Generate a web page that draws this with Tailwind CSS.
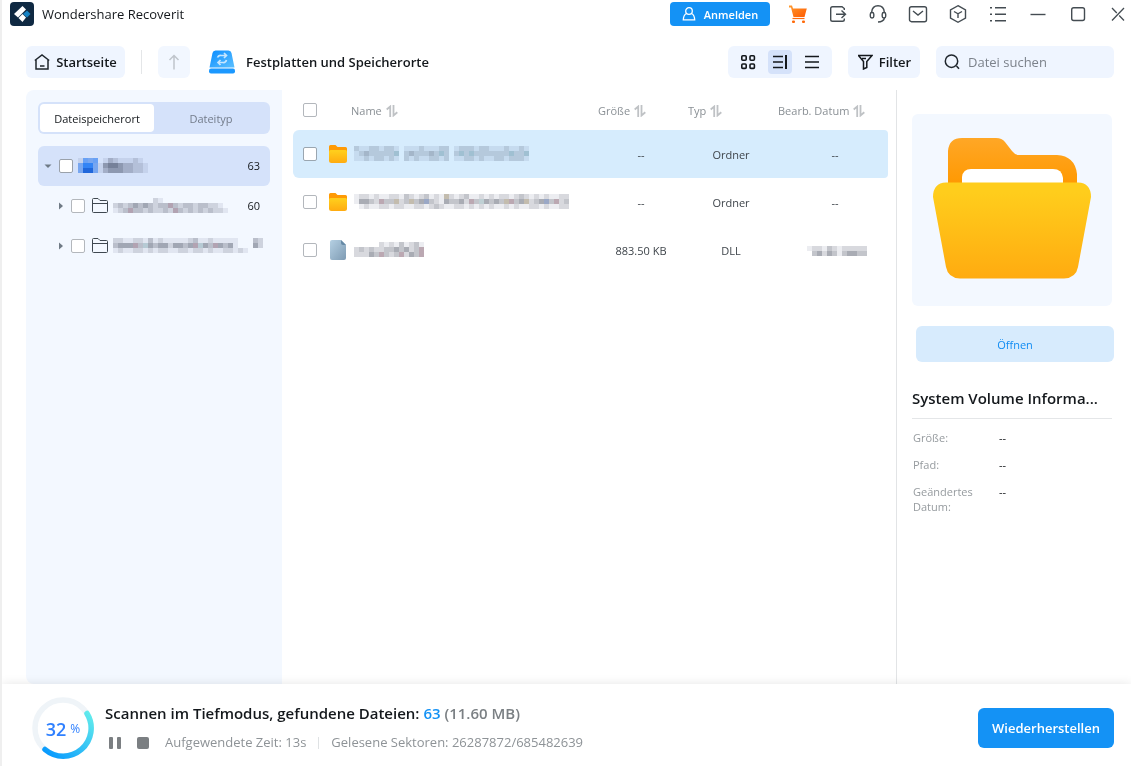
<!DOCTYPE html>
<html lang="de">
<head>
<meta charset="utf-8">
<meta name="viewport" content="width=device-width, initial-scale=1">
<title>Wondershare Recoverit</title>
<script src="https://cdn.jsdelivr.net/npm/@tailwindcss/browser@4"></script>
</head>
<body class="flex h-screen flex-col overflow-hidden border-l-2 border-[#efefef] bg-white font-['Open_Sans','Noto_Sans',sans-serif] text-[13px] text-[#14181c]">

<svg class="absolute size-0" aria-hidden="true">
  <defs>
    <linearGradient id="back" x1="0" y1="0" x2="0" y2="1"><stop offset="0" stop-color="#ffa726"/><stop offset=".7" stop-color="#ff9800"/></linearGradient>
    <linearGradient id="front" x1="0" y1="0" x2="0" y2="1"><stop offset=".1" stop-color="#ffcd1c"/><stop offset="1" stop-color="#ffab10"/></linearGradient>
    <linearGradient id="doc" x1="0" y1="0" x2="1" y2="1"><stop offset="0" stop-color="#b5d0e3"/><stop offset="1" stop-color="#7e9bb3"/></linearGradient>
    <linearGradient id="drive" x1="0" y1="0" x2="1" y2="1"><stop offset="0" stop-color="#0a8cff"/><stop offset="1" stop-color="#5cc0ff"/></linearGradient>
    <linearGradient id="cart" x1="0" y1="0" x2="1" y2="1"><stop offset="0" stop-color="#ff9a2e"/><stop offset="1" stop-color="#ff5a00"/></linearGradient>
    <linearGradient id="arc" x1="1" y1="0" x2="0" y2="1"><stop offset="0" stop-color="#62ecec"/><stop offset="1" stop-color="#0496ff"/></linearGradient>
    <symbol id="folder" viewBox="0 0 18 18"><path d="M0 1.5Q0 0 1.500 0H6.500L8.500 2H16.500Q18 2 18 3.500V9H0Z" fill="#ff9a05"/><path d="M0 6.500Q0 5 1.500 5H16.500Q18 5 18 6.500V15.500Q18 18 15.500 18H2.500Q0 18 0 15.500Z" fill="url(#front)"/></symbol>
    <symbol id="outline-folder" viewBox="0 0 16 16"><path d="M.5 13.500V1.500Q.5 .5 1.500 .5H6L8 2.500H14.500Q15.500 2.500 15.500 3.500V13.500Q15.500 14.500 14.500 14.500H1.500Q.5 14.500 .5 13.500ZM.5 5.500H15.500" fill="none" stroke="#3f4850"/></symbol>
    <symbol id="sort" viewBox="0 0 12 12"><path d="M.7 4.500 4.200 1.500V12M7.500 0V10.500L11.300 7.300" fill="none" stroke="#bfc2c5" stroke-width="1.800"/></symbol>
  </defs>
</svg>

<header class="flex h-7 shrink-0 items-center pr-[3px] pl-2">
  <svg class="size-6" viewBox="0 0 24 24" aria-hidden="true"><rect width="24" height="24" rx="4" fill="#0f2942"/><path d="M12.500 4 16 7.500 8 15.500 4 12Z" fill="#fff"/><path d="M12.500 12 16 15.500 12.500 20 8.500 16Z" fill="#fff"/><path d="M17 8.500 20.500 12 17 15.500 13 12Z" fill="#1683c4"/></svg>
  <h1 class="ml-2 pt-0.5 text-[13px]">Wondershare Recoverit</h1>
  <div class="ml-auto flex items-center gap-5 text-[#444c52]">
    <button class="-mr-0.5 flex h-6 w-[100px] items-center justify-center gap-2 rounded bg-[#1492f5] text-[11px] font-semibold text-white">
      <svg class="size-3.5" viewBox="0 0 14 14" fill="none" stroke="currentColor" stroke-width="1.300" aria-hidden="true"><circle cx="7" cy="4" r="3.300"/><path d="M4.500 6.500Q1.500 8 1.300 12.800H12.700Q12.500 8 9.500 6.500"/></svg><span class="pt-0.5">Anmelden</span>
    </button>
    <button aria-label="Warenkorb"><svg class="size-5" viewBox="0 0 20 20"><path d="M1 1.500H4L5 4.500H18.800L16.500 13H5.500L3 3.500H1Z" fill="url(#cart)"/><path d="M4.500 14.500H16.500" stroke="#ff6a0a" stroke-width="1.200"/><rect x="4" y="16.500" width="3" height="2.500" rx="1" fill="#ff6a0a"/><rect x="14" y="16.500" width="3" height="2.500" rx="1" fill="#ff6a0a"/></svg></button>
    <button aria-label="Exportieren"><svg class="size-5" viewBox="0 0 20 20" fill="none" stroke="currentColor" stroke-width="1.400"><path d="M16.300 6V4.500L14 2.700H4.500Q2.700 2.700 2.700 4.500V15.500Q2.700 17.300 4.500 17.300H14.500Q16.300 17.300 16.300 15.500V14.500M8 10.300H17.500M13.500 6.500 17.500 10.300 13.500 14"/></svg></button>
    <button aria-label="Support"><svg class="size-5" viewBox="0 0 20 20" fill="none" stroke="currentColor" stroke-width="1.400"><path d="M3.700 9V8Q4.200 1.700 10 1.700T16.300 8V9"/><rect x="2.300" y="8.500" width="3.500" height="5.500" rx="1.700"/><rect x="14.200" y="8.500" width="3.500" height="5.500" rx="1.700"/><path d="M16.500 14Q15.500 17.800 10 18"/></svg></button>
    <button aria-label="Nachricht"><svg class="size-5" viewBox="0 0 20 20" fill="none" stroke="currentColor" stroke-width="1.400"><rect x="1.500" y="2.700" width="17" height="15" rx="2"/><path d="M5 7 10 11 15 7"/></svg></button>
    <button aria-label="Produkte"><svg class="size-5" viewBox="0 0 20 20" fill="none" stroke="currentColor" stroke-width="1.400"><path d="M10 1.700 17.500 6V14L10 18.300 2.500 14V6ZM6 7.500 10 9.800 14 7.500M10 9.800V14"/></svg></button>
    <button aria-label="Menü"><svg class="size-5" viewBox="0 0 20 20" fill="none" stroke="currentColor" stroke-width="1.500"><path d="M2 3.700H4M7 3.700H18M2 10.300H4M7 10.300H18M2 16.800H4M7 16.800H18"/></svg></button>
    <button aria-label="Minimieren"><svg class="size-5" viewBox="0 0 20 20" stroke="currentColor" stroke-width="1.400"><path d="M2.500 10.500H17.500"/></svg></button>
    <button aria-label="Maximieren"><svg class="size-5" viewBox="0 0 20 20" fill="none" stroke="currentColor" stroke-width="1.400"><rect x="3.700" y="3.700" width="12.800" height="12.800" rx="2"/></svg></button>
    <button aria-label="Schließen"><svg class="size-5" viewBox="0 0 20 20" fill="none" stroke="currentColor" stroke-width="1.300"><path d="M4 4 8.800 9M11.200 11.500 16 16.500M16 4 4 16.500"/></svg></button>
  </div>
</header>

<nav class="mt-[18px] mb-3 flex shrink-0 items-center pr-[17px] pl-6 font-semibold">
  <button class="flex h-8 w-[99px] items-center justify-center gap-1.5 rounded-md bg-[#eff5ff]">
    <svg class="size-4 shrink-0" viewBox="0 0 16 16" fill="none" stroke="#1f262d" stroke-width="1.500" aria-hidden="true"><path d="M.8 6.500 8 1 15.200 6.500M2 6V15H14V6M6 12H10.500"/></svg><span class="pt-0.5">Startseite</span>
  </button>
  <span class="ml-4 h-6 w-px bg-[#e4e6e8]"></span>
  <button class="ml-4 flex size-8 items-center justify-center rounded-md bg-[#f2f7ff]" aria-label="Nach oben"><svg class="h-4 w-3" viewBox="0 0 12 16" fill="none" stroke="#c0c5cc" stroke-width="1.500"><path d="M6 15.500V2M1.500 6 6 1.500 10.500 6"/></svg></button>
  <svg class="ml-[19px] h-6 w-[26px]" viewBox="0 0 26 24" aria-hidden="true"><path d="M3.500 3Q4 .500 6.500 .500H19.500Q22 .500 22.500 3L25.500 17.500H.500Z" fill="url(#drive)"/><rect y="18.500" width="26" height="5" rx="2" fill="#1b98ff"/><path d="M8.500 7.500Q9.500 5 12 5.500H17M15 3 17.500 5.500 15 8M17.500 10Q16.500 13 14 12.500H9.500M11.500 10 9 12.500 11.500 15" fill="none" stroke="#c7e6ff" stroke-width="1.700"/></svg>
  <span class="ml-[11px] pt-0.5">Festplatten und Speicherorte</span>
  <div class="ml-auto flex h-8 w-[104px] items-center justify-center gap-2 rounded-md bg-[#eff5ff]">
    <button class="flex size-6 items-center justify-center" aria-label="Kacheln"><svg class="size-4" viewBox="0 0 16 16" fill="none" stroke="#14181c" stroke-width="1.600"><rect x="1.800" y="1.800" width="4.400" height="4.400" rx="1"/><rect x="10" y="1.800" width="4.400" height="4.400" rx="1"/><rect x="1.800" y="10" width="4.400" height="4.400" rx="1"/><rect x="10" y="10" width="4.400" height="4.400" rx="1"/></svg></button>
    <button class="flex size-6 items-center justify-center rounded bg-[#d5e2fa]" aria-label="Vorschau"><svg class="size-4" viewBox="0 0 16 16" stroke="#14181c" stroke-width="1.600"><path d="M1 2.500H11M1 8H11M1 13.500H11"/><path d="M14 1V15" stroke-width="2"/></svg></button>
    <button class="flex size-6 items-center justify-center" aria-label="Liste"><svg class="size-4" viewBox="0 0 16 16" stroke="#14181c" stroke-width="1.500"><path d="M1 2.500H15M1 8H15M1 13.500H15"/></svg></button>
  </div>
  <button class="ml-4 flex h-8 w-[72px] items-center justify-center gap-1.5 rounded-md bg-[#eff5ff]">
    <svg class="size-4" viewBox="0 0 16 16" fill="none" stroke="#14181c" stroke-width="1.500" aria-hidden="true"><path d="M1 1.500H15L9.800 7.500V13.500L6.500 15V7.500L1.500 1.500M5 4.500H9"/></svg><span class="pt-0.5">Filter</span>
  </button>
  <label class="ml-4 flex h-8 w-[178px] items-center gap-2 rounded-md bg-[#eff5ff] px-2">
    <svg class="size-4 shrink-0" viewBox="0 0 16 16" fill="none" stroke="#1f262d" stroke-width="1.500" aria-hidden="true"><circle cx="7.500" cy="7.200" r="6.200"/><path d="M12.500 12 15 14.800"/></svg>
    <input type="text" aria-label="Datei suchen" placeholder="Datei suchen" class="w-full min-w-0 bg-transparent pt-0.5 font-normal outline-none placeholder:text-[#7c828b]">
  </label>
</nav>

<main class="flex min-h-0 flex-1">
  <aside class="ml-6 w-64 shrink-0 rounded-tl-lg rounded-bl-lg bg-[#f3f8ff] p-3 text-[11px]">
    <div class="flex h-8 rounded-md bg-[#d5e2fa] p-0.5">
      <button class="w-[114px] rounded bg-white pt-0.5">Dateispeicherort</button>
      <button class="flex-1 pt-0.5 text-[#737c8b]">Dateityp</button>
    </div>
    <ul class="mt-3">
      <li class="flex h-10 items-center rounded-md bg-[#d5e2fa] pr-2.5 pl-1.5">
        <svg class="size-2" viewBox="0 0 8 8" aria-hidden="true"><path d="M.5 2.500H7.500L4 6Z" fill="#6f7a85"/></svg>
        <input type="checkbox" aria-label="Laufwerk" class="ml-[7px] size-3.5 appearance-none rounded-xs border border-[#9aa1aa] bg-white">
        <svg class="ml-[5px] h-4 w-[70px]" data-cells="aABA.acbaaaba.|BCCBadeedccbba|BDDBacdddccbba"></svg>
        <span class="ml-auto">63</span>
      </li>
      <li class="flex h-10 items-center pr-2.5 pl-[18px]">
        <svg class="size-2" viewBox="0 0 8 8" aria-hidden="true"><path d="M3 .500V7.500L7 4Z" fill="#6f7a85"/></svg>
        <input type="checkbox" aria-label="Ordner 1" class="ml-[7px] size-3.5 appearance-none rounded-xs border border-[#b3b7bc] bg-white">
        <svg class="mr-[5px] ml-[7px] size-4"><use href="#outline-folder"/></svg>
        <svg class="h-4 w-[120px]" data-cells="........ba..............|bcbcdcdcbccpcbccbccbba..|abcpccbcbbcbpcbcbcbcbba."></svg>
        <span class="ml-auto">60</span>
      </li>
      <li class="flex h-10 items-center pr-1.5 pl-[18px]">
        <svg class="size-2" viewBox="0 0 8 8" aria-hidden="true"><path d="M3 .500V7.500L7 4Z" fill="#6f7a85"/></svg>
        <input type="checkbox" aria-label="Ordner 2" class="ml-[7px] size-3.5 appearance-none rounded-xs border border-[#b3b7bc] bg-white">
        <svg class="mr-[5px] ml-[7px] size-4"><use href="#outline-folder"/></svg>
        <svg class="h-4 w-[150px]" data-cells="bbaabbacabaaaaabcaabaaaaa...cb|cdddpctdcddbddcdptdcpdcda...db|abaabbababbaabbabbabaabbaba..."></svg>
      </li>
    </ul>
  </aside>

  <section class="ml-[11px] min-w-0 flex-1 pr-2 text-[11px]">
    <table class="w-full table-fixed border-separate border-spacing-0 text-[#3f454b]">
      <colgroup><col class="w-9"><col><col class="w-[90px]"><col class="w-[90px]"><col class="w-[110px]"></colgroup>
      <thead class="h-10 text-left text-[#8a9095]">
        <tr>
          <th class="pl-2.5"><input type="checkbox" aria-label="Alle auswählen" class="block size-3.5 appearance-none rounded-xs border border-[#b3b7bc] bg-white"></th>
          <th class="pt-0.5 pl-[22px] font-normal"><span class="flex items-center gap-1">Name <svg class="size-3"><use href="#sort"/></svg></span></th>
          <th class="pt-0.5 font-normal"><span class="flex items-center gap-1">Größe <svg class="size-3"><use href="#sort"/></svg></span></th>
          <th class="pt-0.5 font-normal"><span class="flex items-center gap-1">Typ <svg class="size-3"><use href="#sort"/></svg></span></th>
          <th class="pt-0.5 font-normal whitespace-nowrap"><span class="flex items-center gap-1">Bearb. Datum <svg class="size-3 shrink-0"><use href="#sort"/></svg></span></th>
        </tr>
      </thead>
      <tbody>
        <tr class="h-12">
          <td class="rounded-l-md bg-[#d6ecfd] pl-2.5"><input type="checkbox" aria-label="Datei 1" class="block size-3.5 appearance-none rounded-xs border border-[#9aa6b0] bg-white"></td>
          <td class="bg-[#d6ecfd]"><div class="flex items-center gap-[7px]"><svg class="size-[18px]"><use href="#folder"/></svg><svg class="h-4 w-[175px]" data-cells="baabbabba.aaabaaabb.abbbabbaaabaaba|abcbbbbbt.bcbbbcbtb.btbtbbbbbbbtbbt|aababbaba.babaabbab.aabbabaabbabbba"></svg></div></td>
          <td class="bg-[#d6ecfd] pt-0.5 pr-1 text-center">--</td><td class="bg-[#d6ecfd] pt-0.5 pr-1 text-center">Ordner</td><td class="rounded-r bg-[#d6ecfd] pt-0.5 pl-1 text-center">--</td>
        </tr>
        <tr class="h-12">
          <td class="pl-2.5"><input type="checkbox" aria-label="Datei 2" class="block size-3.5 appearance-none rounded-xs border border-[#b3b7bc] bg-white"></td>
          <td><div class="flex items-center gap-[7px]"><svg class="size-[18px]"><use href="#folder"/></svg><svg class="h-4 w-[220px]" data-cells="abbabaabbacbabcabaybabcaabababbabcbababaabb|addcbpccybcycducbadccdbpctdcdcypcdybcducpbc|.abaabbabbaabbabcbaabbabababaababaabbabaabb"></svg></div></td>
          <td class="pt-0.5 pr-1 text-center">--</td><td class="pt-0.5 pr-1 text-center">Ordner</td><td class="pt-0.5 pl-1 text-center">--</td>
        </tr>
        <tr class="h-12">
          <td class="pl-2.5"><input type="checkbox" aria-label="Datei 3" class="block size-3.5 appearance-none rounded-xs border border-[#b3b7bc] bg-white"></td>
          <td><div class="flex items-center gap-[7px]"><svg class="h-5 w-[18px]" viewBox="0 0 18 20"><path d="M1 2Q1 0 3 0H12L17 5V18Q17 20 15 20H3Q1 20 1 18Z" fill="url(#doc)"/><path d="M12 0V3Q12 5 14 5H17Z" fill="#668aa6"/></svg><svg class="h-4 w-[75px]" data-cells=".....babacabca|bcbcbbccdcdbcp|bbbdcpcbcpbdcp"></svg></div></td>
          <td class="pt-0.5 pr-1 text-center">883.50 KB</td><td class="pt-0.5 pr-1 text-center">DLL</td><td class="pt-0.5 pl-2"><svg class="mx-auto h-2.5 w-[60px]" data-cells="abbacbabbbbb|.cdbdcacddcc"></svg></td>
        </tr>
      </tbody>
    </table>
  </section>

  <aside class="w-[235px] shrink-0 border-l border-[#e2e4e6] pt-6 pr-[17px] pl-[15px]">
    <div class="mr-0.5 flex h-48 items-center justify-center rounded-md bg-[#f3f8ff] pb-1">
      <svg class="h-[142px] w-40" viewBox="0 0 160 142" aria-hidden="true"><path d="M16 70V14Q17 1 30 1H64Q70 1 73 5L80 14Q83 18 87 18H125Q143 19 145 37V70Z" fill="url(#back)"/><path d="M30 55V40Q31 32 39 32H121Q130 32 131 41V55Z" fill="#fff"/><path d="M14 45.500H146Q159 46 159 60L146 130Q144 141 132 141.500H28Q16 141 14 130L1 60Q1 46 14 45.500Z" fill="url(#front)"/></svg>
    </div>
    <button class="mt-5 ml-1 flex h-9 w-[198px] items-center justify-center rounded-md bg-[#d7ebfd] pt-0.5 text-[11px] text-[#118cf3]">Öffnen</button>
    <h2 class="mt-6 mr-0.5 truncate border-b border-[#e4e6e8] pb-2 text-[15px] leading-6 font-semibold">System Volume Informa...</h2>
    <dl class="mt-[11px] grid grid-cols-[86px_1fr] gap-y-3 pl-px text-[11px] leading-[15px]">
      <dt class="text-[#969b9f]">Größe:</dt><dd>--</dd>
      <dt class="text-[#969b9f]">Pfad:</dt><dd>--</dd>
      <dt class="text-[#969b9f]">Geändertes<br>Datum:</dt><dd>--</dd>
    </dl>
  </aside>
</main>

<footer class="z-10 flex h-[82px] shrink-0 items-center bg-white pr-[17px] pl-[29px] shadow-[0_0_10px_rgba(0,0,0,0.1)]">
  <div class="relative mt-1.5 flex size-16 items-center justify-center gap-1 pt-0.5 text-[#2f80ff]">
    <svg class="absolute inset-0 size-16" viewBox="0 0 64 64" fill="none" stroke-width="5.500" aria-hidden="true"><circle cx="32" cy="32" r="28" stroke="#eff4f8"/><path d="M56 17.500A28 28 0 0 1 14 53.500" stroke="url(#arc)" stroke-linecap="round"/></svg>
    <span class="text-lg font-semibold">32</span><span class="text-xs">%</span>
  </div>
  <div class="mt-1 ml-2.5">
    <p class="text-[15px] leading-6 font-semibold">Scannen im Tiefmodus, gefundene Dateien: <span class="text-[#1492f5]">63</span> <span class="text-[#7b8084]">(11.60 MB)</span></p>
    <div class="mt-2 flex items-center text-[13px] text-[#8e9397]">
      <button class="ml-1" aria-label="Pause"><svg class="size-3" viewBox="0 0 12 12" fill="#7b7f82"><rect width="4" height="12" rx="1"/><rect x="8" width="4" height="12" rx="1"/></svg></button>
      <button class="ml-4" aria-label="Stopp"><svg class="size-3" viewBox="0 0 12 12"><rect width="12" height="12" rx="2" fill="#7b7f82"/></svg></button>
      <span class="ml-4">Aufgewendete Zeit: 13s</span>
      <span class="mx-3 h-3 w-px bg-[#dfe2e4]"></span>
      <span>Gelesene Sektoren: 26287872/685482639</span>
    </div>
  </div>
  <button class="mt-1.5 ml-auto h-10 w-[136px] rounded-md bg-[#1492f5] pt-0.5 text-[13px] font-semibold text-white">Wiederherstellen</button>
</footer>

<script>
  // Redacted names are drawn as a mosaic of 5px cells.
  const shades = { a: '#ecedf1', b: '#d8d9de', c: '#c3c5cb', d: '#a9acb4', e: '#8d919c', p: '#bba8b2', t: '#bfd0d4', y: '#c3bcae', u: '#9aa8c6', A: '#7eb6fa', B: '#8fbcf5', C: '#3d95fa', D: '#2674e0' };
  document.querySelectorAll('svg[data-cells]').forEach(svg => {
    svg.setAttribute('shape-rendering', 'crispEdges');
    svg.style.mixBlendMode = 'multiply';
    svg.dataset.cells.split('|').forEach((row, y) => [...row].forEach((c, x) => {
      if (!shades[c]) return;
      const r = document.createElementNS('http://www.w3.org/2000/svg', 'rect');
      r.setAttribute('x', x * 5); r.setAttribute('y', y * 5);
      r.setAttribute('width', 5); r.setAttribute('height', 5);
      r.setAttribute('fill', shades[c]);
      svg.append(r);
    }));
  });
</script>
</body>
</html>
